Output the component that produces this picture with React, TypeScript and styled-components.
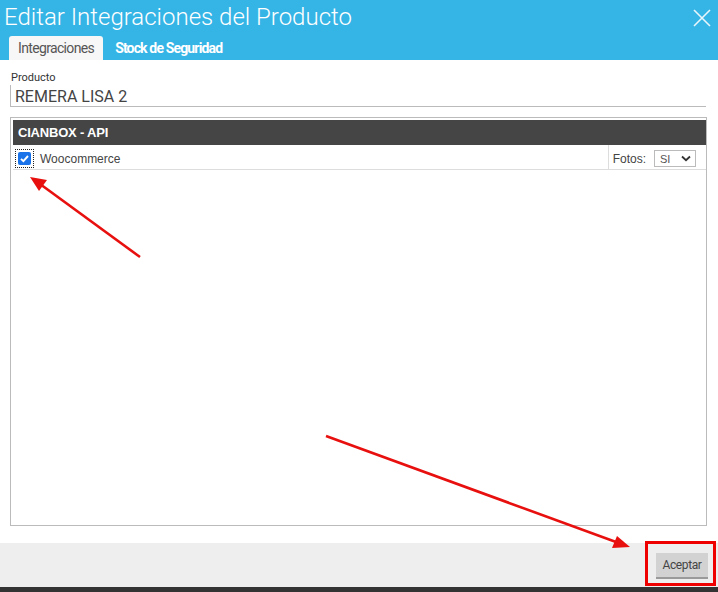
import React from "react";
import styled, { createGlobalStyle } from "styled-components";

const Global = createGlobalStyle`
  html, body { margin: 0; padding: 0; }
  body { width: 718px; height: 592px; overflow: hidden; background: #fff; }
  #root { height: 592px; }
  * { box-sizing: border-box; }
`;

const Page = styled.div`
  position: relative;
  width: 718px;
  height: 592px;
  display: flex;
  flex-direction: column;
  font-family: Roboto, "Liberation Sans", sans-serif;
`;

const Header = styled.header`
  background: #35b4e6;
  height: 60px;
  display: flex;
  flex-direction: column;
  justify-content: space-between;
`;

const TitleRow = styled.div`
  display: flex;
  align-items: center;
  justify-content: space-between;
  padding: 2px 6px 0 4px;
`;

const Title = styled.h1`
  margin: 0;
  font-family: Roboto, sans-serif;
  font-weight: 300;
  font-size: 24px;
  line-height: 30px;
  color: #fff;
`;

const Close = styled.button`
  border: 0;
  background: none;
  padding: 0;
  width: 20px;
  height: 20px;
  margin-top: 2px;
  display: flex;
  cursor: pointer;
`;

const Tabs = styled.nav`
  display: flex;
  align-items: flex-end;
  padding-left: 9px;
  gap: 12px;
`;

const Tab = styled.div<{ $active?: boolean }>`
  height: 24px;
  display: flex;
  align-items: center;
  padding: 0 ${(p) => (p.$active ? "9px" : "0")};
  border-radius: 3px 3px 0 0;
  background: ${(p) => (p.$active ? "#f7f7f7" : "transparent")};
  color: ${(p) => (p.$active ? "#555" : "#fff")};
  font-family: Roboto, sans-serif;
  font-size: 14px;
  font-weight: ${(p) => (p.$active ? 400 : 700)};
  letter-spacing: ${(p) => (p.$active ? "-0.65px" : "-0.85px")};
`;

const Body = styled.main`
  flex: 1;
  display: flex;
  flex-direction: column;
  padding: 11px 11px 17px 10px;
`;

const Label = styled.label`
  font-family: Roboto, sans-serif;
  font-size: 11px;
  color: #333;
  padding-left: 1px;
  line-height: 14px;
`;

const Input = styled.div`
  height: 22px;
  border-left: 1px solid #bbb;
  border-bottom: 1px solid #bbb;
  padding: 2px 0 0 4px;
  font-family: Roboto, sans-serif;
  font-size: 16px;
  color: #444;
  line-height: 20px;
  margin-right: 1px;
`;

const Panel = styled.section`
  flex: 1;
  margin-top: 10px;
  border: 1px solid #bbb;
  padding: 2px 0 0 2px;
`;

const PanelHead = styled.div`
  background: #454545;
  height: 25px;
  display: flex;
  align-items: center;
  padding-left: 5px;
  color: #fff;
  font-family: "Liberation Sans", Arial, sans-serif;
  font-size: 13px;
  font-weight: 700;
  letter-spacing: -0.2px;
`;

const Row = styled.div`
  height: 25px;
  display: flex;
  align-items: center;
  padding-top: 3px;
  border-bottom: 1px solid #ddd;
  font-family: "Liberation Sans", Arial, sans-serif;
  font-size: 12px;
  color: #444;
`;

const CheckWrap = styled.span`
  margin-left: 3px;
  width: 17px;
  height: 17px;
  outline: 1px dotted #222;
  display: flex;
  align-items: center;
  justify-content: center;
`;

const Check = styled.span`
  width: 13px;
  height: 13px;
  border-radius: 2px;
  background: #1a73e8;
  display: flex;
  align-items: center;
  justify-content: center;
`;

const RowName = styled.span`
  margin-left: 7px;
  flex: 1;
`;

const Fotos = styled.div`
  align-self: stretch;
  margin-top: -3px;
  display: flex;
  align-items: center;
  padding: 3px 10px 0 4px;
  border-left: 1px solid #ddd;
  gap: 8px;
`;

const Select = styled.div`
  width: 42px;
  height: 17px;
  border: 1px solid #bbb;
  display: flex;
  align-items: center;
  justify-content: space-between;
  padding: 0 4px 0 5px;
  font-size: 11px;
  color: #555;
`;

const Footer = styled.footer`
  height: 44px;
  background: #eeeeee;
  display: flex;
  align-items: center;
  justify-content: flex-end;
  padding-right: 10px;
`;

const Button = styled.button`
  height: 26px;
  width: 52px;
  padding: 0;
  border: 0;
  border-bottom: 2px solid #9a9a9a;
  background: #d2d2d2;
  font-family: Roboto, sans-serif;
  font-size: 12px;
  color: #444;
  letter-spacing: -0.4px;
  margin-top: 1px;
`;

const Strip = styled.div`
  height: 5px;
  background: #333;
`;

const Overlay = styled.svg`
  position: absolute;
  left: 0;
  top: 0;
  pointer-events: none;
`;

export default function App() {
  return (
    <>
      <Global />
      <Page>
        <Header>
          <TitleRow>
            <Title>Editar Integraciones del Producto</Title>
            <Close aria-label="Cerrar">
              <svg width="20" height="20" viewBox="0 0 20 20">
                <path d="M2 2 L18 18 M18 2 L2 18" stroke="#e8f6fc" strokeWidth="1.6" fill="none" />
              </svg>
            </Close>
          </TitleRow>
          <Tabs>
            <Tab $active>Integraciones</Tab>
            <Tab>Stock de Seguridad</Tab>
          </Tabs>
        </Header>
        <Body>
          <Label>Producto</Label>
          <Input>REMERA LISA 2</Input>
          <Panel>
            <PanelHead>CIANBOX - API</PanelHead>
            <Row>
              <CheckWrap>
                <Check>
                  <svg width="11" height="11" viewBox="0 0 11 11">
                    <path d="M2 5.8 L4.4 8.2 L9 3" stroke="#fff" strokeWidth="1.9" fill="none" />
                  </svg>
                </Check>
              </CheckWrap>
              <RowName>Woocommerce</RowName>
              <Fotos>
                <span>Fotos:</span>
                <Select>
                  <span>SI</span>
                  <svg width="10" height="7" viewBox="0 0 10 7">
                    <path d="M1 1.5 L5 5.2 L9 1.5" stroke="#333" strokeWidth="1.8" fill="none" />
                  </svg>
                </Select>
              </Fotos>
            </Row>
          </Panel>
        </Body>
        <Footer>
          <Button>Aceptar</Button>
        </Footer>
        <Strip />
        <Overlay width="718" height="592" viewBox="0 0 718 592">
          <line x1="140" y1="257" x2="40" y2="184" stroke="#e8100f" strokeWidth="2.6" />
          <polygon points="30,177 47,180 39,191" fill="#e8100f" />
          <line x1="326" y1="436" x2="616" y2="542" stroke="#e8100f" strokeWidth="2.6" />
          <polygon points="630,547 612,548 617,536" fill="#e8100f" />
          <rect x="646.5" y="542.5" width="68" height="42" fill="none" stroke="#e00" strokeWidth="3" />
        </Overlay>
      </Page>
    </>
  );
}
